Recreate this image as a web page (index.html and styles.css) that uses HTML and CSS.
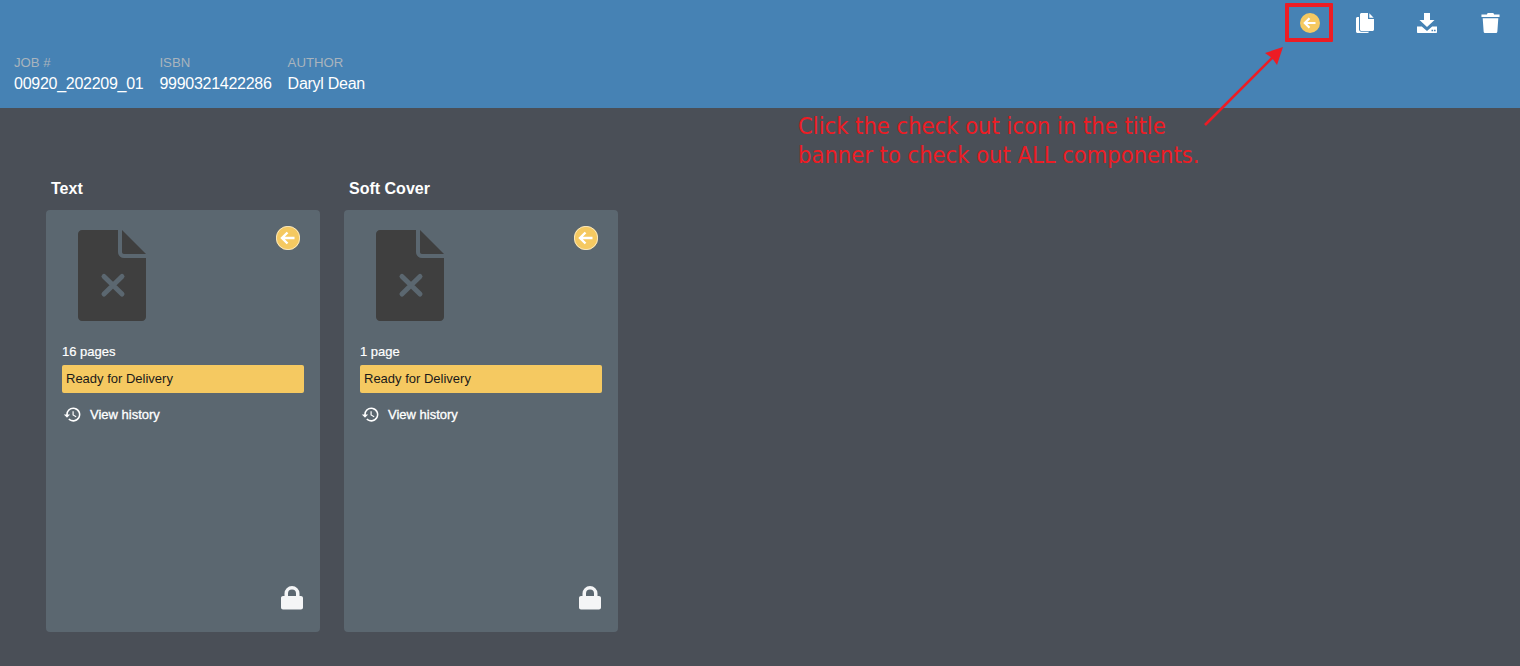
FILE: index.html
```html
<!DOCTYPE html>
<html lang="en">
<head>
<meta charset="utf-8">
<title>Job</title>
<link rel="stylesheet" href="styles.css">
</head>
<body>
<header class="banner">
  <div class="actions">
    <button class="action action-checkout"><svg class="checkout-lg" viewBox="0 0 20 20"><circle cx="10" cy="10" r="10" fill="#f5c961"/><path d="M15.500 10H5M9.500 5.200 4.800 10l4.700 4.800" fill="none" stroke="#fff" stroke-width="2.200"/></svg></button>
    <button class="action action-copy"><svg class="ic-copy" viewBox="0 0 18 20"><path fill="#fff" d="M5.500 0H12v6h6v10.500c0 .8-.7 1.500-1.500 1.500h-11c-.8 0-1.500-.7-1.500-1.500v-15C4 .7 4.700 0 5.500 0zM13.300.3 17.700 4.700h-4.400zM0 5.500C0 4.700.7 4 1.500 4H3v12.500c0 1.200 1 2.300 2.200 2.300H13c0 .7-.7 1.200-1.500 1.200h-10C.7 20 0 19.300 0 18.500z"/></svg></button>
    <button class="action action-download"><svg class="ic-down" viewBox="0 0 20 20"><path fill="#fff" d="M7 0h6v7h4.500L10 14 2.500 7H7zM0 13.500h4.800L10 18l5.200-4.500H20v5.500c0 .6-.4 1-1 1H1c-.6 0-1-.4-1-1z"/><path fill="#4682b4" d="M14.500 16.800h1.600v1.500h-1.600zM17 16.800h1.600v1.500H17z"/></svg></button>
    <button class="action action-delete"><svg class="ic-trash" viewBox="0 0 19 21"><path fill="#fff" d="M6.500 0h6l.8 1.500H19v2.700H0V1.500h5.700zM1.300 5.500h16.400l-1 13.800c-.1 1-.8 1.700-1.800 1.700H4.100c-1 0-1.700-.7-1.800-1.700z"/></svg></button>
  </div>
  <div class="meta">
    <div class="meta-item"><span class="meta-label">JOB #</span><span class="meta-value">00920_202209_01</span></div>
    <div class="meta-item"><span class="meta-label">ISBN</span><span class="meta-value">9990321422286</span></div>
    <div class="meta-item"><span class="meta-label">AUTHOR</span><span class="meta-value">Daryl Dean</span></div>
  </div>
</header>
<main class="content">
  <section class="component">
    <h2 class="component-title">Text</h2>
    <div class="card">
      <div class="card-top">
        <svg class="doc" viewBox="0 0 68 91"><path fill="#3f3f3f" d="M4 0h36v22c0 3 2 6 6 6h22v59c0 2.200-1.800 4-4 4H4c-2.200 0-4-1.800-4-4V4c0-2.200 1.800-4 4-4z"/><path fill="#3f3f3f" d="M44 0 68 24H46c-1.200 0-2-.8-2-2z"/><path d="M26 46.500 44 64M44 46.500 26 64" stroke="#5b6770" stroke-width="5" stroke-linecap="round"/></svg>
        <svg class="checkout" viewBox="0 0 24 24"><circle cx="12" cy="12" r="12" fill="#f5c961"/><circle cx="12" cy="12" r="11.700" fill="none" stroke="#fff" stroke-width=".6"/><path d="M18.500 12H6.500M11.500 6.500 6 12l5.500 5.500" fill="none" stroke="#fff" stroke-width="2.400"/></svg>
      </div>
      <p class="pages">16 pages</p>
      <div class="status">Ready for Delivery</div>
      <a class="history"><svg class="ic-history" viewBox="0 0 24 24"><path fill="#fff" d="M13 3a9 9 0 0 0-9 9H1l3.890 3.890.07.14L9 12H6a7 7 0 1 1 2.050 4.950l-1.420 1.420A9 9 0 1 0 13 3zm-1 5v5l4.280 2.540.72-1.210-3.500-2.080V8z"/></svg>View history</a>
      <div class="card-foot"><svg class="ic-lock" viewBox="0 0 22 24"><path fill="#f4f5f6" d="M3.500 10V7.500a7.500 7.500 0 0 1 15 0V10H20c1.100 0 2 .9 2 2v9.500c0 1.100-.9 2-2 2H2c-1.100 0-2-.9-2-2V12c0-1.100.9-2 2-2zm3.500 0h8V7.500a4 4 0 0 0-8 0z"/></svg></div>
    </div>
  </section>
  <section class="component">
    <h2 class="component-title">Soft Cover</h2>
    <div class="card">
      <div class="card-top">
        <svg class="doc" viewBox="0 0 68 91"><path fill="#3f3f3f" d="M4 0h36v22c0 3 2 6 6 6h22v59c0 2.200-1.800 4-4 4H4c-2.200 0-4-1.800-4-4V4c0-2.200 1.800-4 4-4z"/><path fill="#3f3f3f" d="M44 0 68 24H46c-1.200 0-2-.8-2-2z"/><path d="M26 46.500 44 64M44 46.500 26 64" stroke="#5b6770" stroke-width="5" stroke-linecap="round"/></svg>
        <svg class="checkout" viewBox="0 0 24 24"><circle cx="12" cy="12" r="12" fill="#f5c961"/><circle cx="12" cy="12" r="11.700" fill="none" stroke="#fff" stroke-width=".6"/><path d="M18.500 12H6.500M11.500 6.500 6 12l5.500 5.500" fill="none" stroke="#fff" stroke-width="2.400"/></svg>
      </div>
      <p class="pages">1 page</p>
      <div class="status">Ready for Delivery</div>
      <a class="history"><svg class="ic-history" viewBox="0 0 24 24"><path fill="#fff" d="M13 3a9 9 0 0 0-9 9H1l3.890 3.890.07.14L9 12H6a7 7 0 1 1 2.050 4.950l-1.420 1.420A9 9 0 1 0 13 3zm-1 5v5l4.280 2.540.72-1.210-3.500-2.080V8z"/></svg>View history</a>
      <div class="card-foot"><svg class="ic-lock" viewBox="0 0 22 24"><path fill="#f4f5f6" d="M3.500 10V7.500a7.500 7.500 0 0 1 15 0V10H20c1.100 0 2 .9 2 2v9.500c0 1.100-.9 2-2 2H2c-1.100 0-2-.9-2-2V12c0-1.100.9-2 2-2zm3.500 0h8V7.500a4 4 0 0 0-8 0z"/></svg></div>
    </div>
  </section>
</main>
<div class="callout-box"></div>
<svg class="callout-arrow" viewBox="0 0 90 90"><path d="M2 85 72 15" stroke="#ed1c24" stroke-width="2.600" fill="none"/><path d="M80 7 74 25 69 18 62 13z" fill="#ed1c24"/></svg>
<p class="callout-text">Click the check out icon in the title<br>banner to check out ALL components.</p>
</body>
</html>
```

FILE: styles.css
```css
* { box-sizing: border-box; }
html, body { height: 100%; }
body {
  margin: 0;
  background: #4a4f57;
  font-family: Arial, "Liberation Sans", sans-serif;
  color: #fff;
  overflow: hidden;
  position: relative;
}
.banner {
  height: 108px;
  background: #4682b4;
  display: flex;
  flex-direction: column;
}
.actions {
  display: flex;
  justify-content: flex-end;
  align-items: center;
  height: 46px;
}
.action {
  height: 46px;
  padding: 0;
  border: 0;
  background: none;
  display: flex;
  align-items: center;
  justify-content: center;
}
.action-checkout { width: 52px; }
.action-copy { width: 58px; }
.action-download { width: 66px; }
.action-delete { width: 60px; }
.action svg { display: block; }
.checkout-lg { width: 20px; height: 20px; }
.ic-copy { width: 18px; height: 20px; }
.ic-down { width: 20px; height: 20px; }
.ic-trash { width: 19px; height: 20px; }
.meta {
  display: flex;
  gap: 16px;
  padding: 9px 14px 0;
}
.meta-item { display: flex; flex-direction: column; }
.meta-label { font-size: 13.2px; line-height: 16px; color: #a9b4bd; }
.meta-value { font-size: 16px; letter-spacing: -0.27px; line-height: 22px; margin-top: 2px; }
.content {
  display: flex;
  gap: 24px;
  padding: 70px 0 0 46px;
}
.component { width: 274px; }
.component-title {
  margin: 0;
  padding: 1px 0 0 5px;
  font-size: 16px;
  line-height: 20px;
  font-weight: 700;
  height: 32px;
}
.card {
  height: 422px;
  background: #5b6770;
  border-radius: 4px;
  padding: 20px 16px 0;
  display: flex;
  flex-direction: column;
}
.card-top {
  display: flex;
  justify-content: space-between;
  align-items: flex-start;
  padding: 0 4px 0 16px;
  height: 91px;
}
.doc { width: 68px; height: 91px; display: block; }
.checkout { width: 24px; height: 24px; margin-top: -4px; display: block; }
.pages {
  margin: 23px 0 0;
  font-size: 13px;
  line-height: 16px;
  height: 21px;
  -webkit-text-stroke: 0.2px #fff;
}
.status {
  height: 28px;
  background: #f5c961;
  border-radius: 2px;
  color: #1a1a1a;
  font-size: 13px;
  line-height: 27px;
  padding-left: 4px;
}
.history {
  display: flex;
  align-items: center;
  gap: 8px;
  margin-top: 11px;
  height: 20px;
  font-size: 13px;
  -webkit-text-stroke: 0.3px #fff;
  padding-left: 1px;
}
.ic-history { width: 19px; height: 19px; display: block; }
.card-foot {
  margin-top: auto;
  display: flex;
  justify-content: flex-end;
  padding: 0 1px 22px 0;
}
.ic-lock { width: 22px; height: 24px; display: block; }
.callout-box {
  position: absolute;
  left: 1285px;
  top: 3px;
  width: 48px;
  height: 39px;
  border: 4px solid #ed1c24;
  border-radius: 1px;
}
.callout-arrow {
  position: absolute;
  left: 1203px;
  top: 40px;
  width: 90px;
  height: 90px;
}
.callout-text {
  position: absolute;
  left: 798px;
  top: 112px;
  margin: 0;
  font-family: "DejaVu Sans Condensed", "DejaVu Sans", sans-serif;
  font-size: 23.5px;
  line-height: 29px;
  color: #ed1c24;
  white-space: nowrap;
}
```
